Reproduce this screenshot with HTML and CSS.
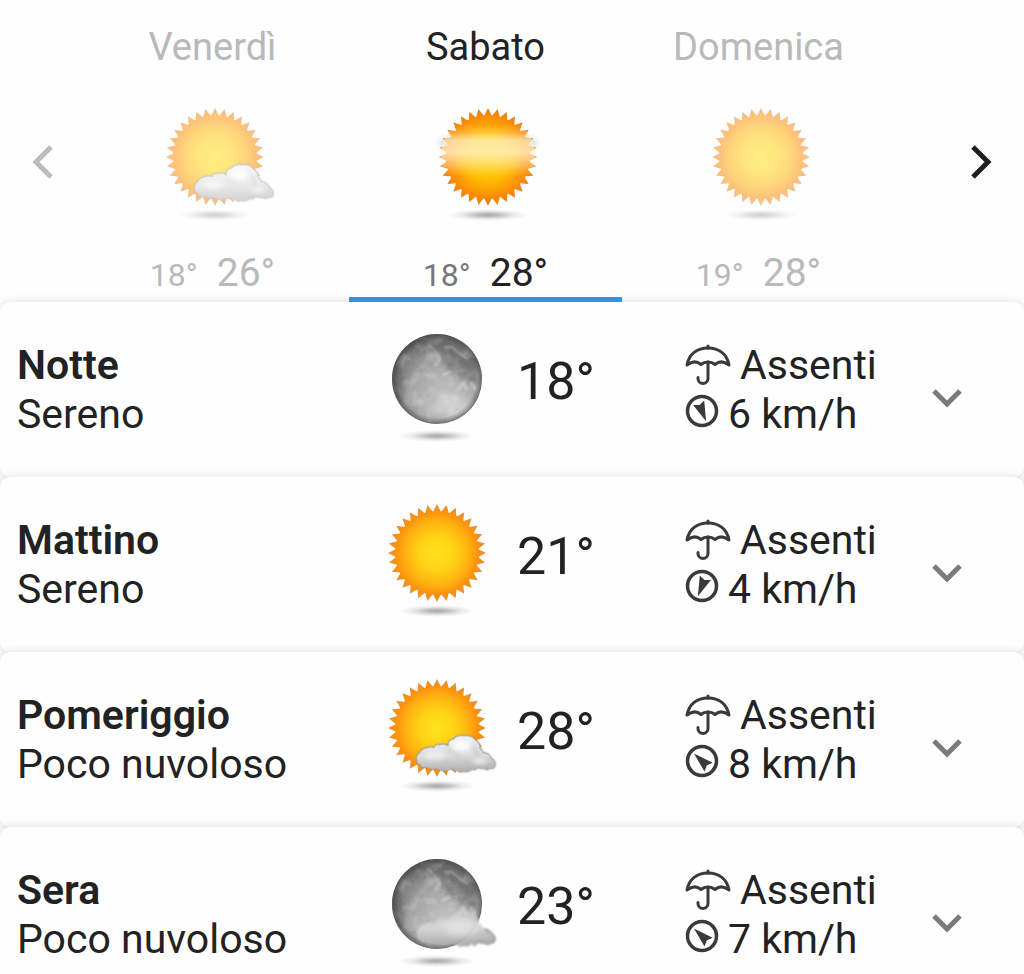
FILE: index.html
```html
<!DOCTYPE html>
<html lang="it">
<head>
<meta charset="utf-8">
<meta name="viewport" content="width=device-width, initial-scale=1">
<title>Previsioni meteo</title>
<link rel="stylesheet" href="styles.css">
</head>
<body>
<svg class="sprite" aria-hidden="true">
  <defs>
    <radialGradient id="sun-fill" gradientUnits="userSpaceOnUse" cx="0" cy="0" r="49">
      <stop offset="0" stop-color="#ffe31c"/>
      <stop offset=".35" stop-color="#ffd316"/>
      <stop offset=".65" stop-color="#ffb210"/>
      <stop offset=".84" stop-color="#fd920f"/>
      <stop offset=".91" stop-color="#f48f1c"/>
      <stop offset="1" stop-color="#d2965a"/>
    </radialGradient>
    <radialGradient id="haze-fill" gradientUnits="userSpaceOnUse" cx="0" cy="0" r="49">
      <stop offset="0" stop-color="#ffcf08"/>
      <stop offset=".45" stop-color="#ffc004"/>
      <stop offset=".85" stop-color="#fb8905"/>
      <stop offset=".93" stop-color="#ee8312"/>
      <stop offset="1" stop-color="#cf9156"/>
    </radialGradient>
    <linearGradient id="haze-band" gradientUnits="userSpaceOnUse" x1="0" y1="22" x2="0" y2="74">
      <stop offset="0" stop-color="#fff6d8" stop-opacity="0"/>
      <stop offset=".15" stop-color="#fff6d8" stop-opacity=".2"/>
      <stop offset=".32" stop-color="#fff6d8" stop-opacity=".7"/>
      <stop offset=".55" stop-color="#fff6d8" stop-opacity=".75"/>
      <stop offset=".78" stop-color="#fff6d8" stop-opacity=".4"/>
      <stop offset="1" stop-color="#fff6d8" stop-opacity="0"/>
    </linearGradient>
    <radialGradient id="shadow-fill">
      <stop offset="0" stop-color="#000" stop-opacity=".34"/>
      <stop offset=".3" stop-color="#000" stop-opacity=".24"/>
      <stop offset=".65" stop-color="#000" stop-opacity=".08"/>
      <stop offset="1" stop-color="#000" stop-opacity="0"/>
    </radialGradient>
    <radialGradient id="moon-fill" cx=".6" cy=".68" r=".75">
      <stop offset="0" stop-color="#c2c2c2"/>
      <stop offset=".45" stop-color="#a8a8a8"/>
      <stop offset=".8" stop-color="#7c7c7c"/>
      <stop offset="1" stop-color="#5c5c5c"/>
    </radialGradient>
    <radialGradient id="moon-rim">
      <stop offset=".86" stop-color="#333" stop-opacity="0"/>
      <stop offset="1" stop-color="#333" stop-opacity=".5"/>
    </radialGradient>
    <linearGradient id="cloud-fill" x1=".4" y1="0" x2=".5" y2="1">
      <stop offset="0" stop-color="#f1f1f1"/>
      <stop offset=".55" stop-color="#dcdcdc"/>
      <stop offset="1" stop-color="#adadad"/>
    </linearGradient>
    <linearGradient id="night-cloud-fill" x1="0" y1="0" x2=".2" y2="1">
      <stop offset="0" stop-color="#d0d0d0" stop-opacity=".35"/>
      <stop offset=".5" stop-color="#d8d8d8" stop-opacity=".9"/>
      <stop offset="1" stop-color="#a8a8a8" stop-opacity=".9"/>
    </linearGradient>
    <filter id="soft1" x="-20%" y="-20%" width="140%" height="140%"><feGaussianBlur stdDeviation="1"/></filter>
    <filter id="soft2" x="-40%" y="-40%" width="180%" height="180%"><feGaussianBlur stdDeviation="2"/></filter>
    <filter id="soft3" x="-40%" y="-80%" width="180%" height="260%"><feGaussianBlur stdDeviation="3"/></filter>
    <filter id="dust" x="0" y="0" width="100%" height="100%">
      <feTurbulence type="fractalNoise" baseFrequency=".07" numOctaves="4" seed="8"/>
      <feColorMatrix values="0 0 0 0 1  0 0 0 0 1  0 0 0 0 1  2.4 0 0 0 -1"/>
    </filter>
    <clipPath id="moon-clip"><circle cx="60" cy="56" r="44"/></clipPath>
    <path id="cloud-shape" d="M40 87Q39 82 43 80Q44 76 50 75Q54 73 57 75Q58 71 63 72Q67 70 71 73Q71 67 77 66Q80 62 87 63Q94 62 98 67Q103 70 103 76Q106 77 106 80Q112 80 114 85Q119 88 118 92Q118 96 113 95Q110 98 107 95Q103 96 101 94Q99 98 95 96Q91 100 87 98Q82 100 80 97Q77 98 75 95Q71 98 67 97Q63 98 59 95Q54 97 50 94Q45 95 43 91Q40 91 40 87Z"/>
    <path id="sun-ray" d="M0-49L4-41V41L0 49-4 41V-41Z"/>
    <g id="sun-shape">
      <circle r="42"/>
      <use href="#sun-ray"/>
      <use href="#sun-ray" transform="rotate(11.25)"/>
      <use href="#sun-ray" transform="rotate(22.5)"/>
      <use href="#sun-ray" transform="rotate(33.75)"/>
      <use href="#sun-ray" transform="rotate(45)"/>
      <use href="#sun-ray" transform="rotate(56.25)"/>
      <use href="#sun-ray" transform="rotate(67.5)"/>
      <use href="#sun-ray" transform="rotate(78.75)"/>
      <use href="#sun-ray" transform="rotate(90)"/>
      <use href="#sun-ray" transform="rotate(101.25)"/>
      <use href="#sun-ray" transform="rotate(112.5)"/>
      <use href="#sun-ray" transform="rotate(123.75)"/>
      <use href="#sun-ray" transform="rotate(135)"/>
      <use href="#sun-ray" transform="rotate(146.25)"/>
      <use href="#sun-ray" transform="rotate(157.5)"/>
      <use href="#sun-ray" transform="rotate(168.75)"/>
    </g>
  </defs>

  <symbol id="sun" viewBox="-4 3 124 120">
    <ellipse cx="60" cy="113" rx="38" ry="6" fill="url(#shadow-fill)"/>
    <use href="#sun-shape" transform="translate(60 55)" fill="url(#sun-fill)"/>
  </symbol>

  <symbol id="haze" viewBox="-4 3 124 120">
    <ellipse cx="60" cy="113" rx="40" ry="6" fill="url(#shadow-fill)"/>
    <ellipse cx="60" cy="41" rx="48" ry="7" fill="#555" opacity=".4" filter="url(#soft3)"/>
    <use href="#sun-shape" transform="translate(60 55)" fill="url(#haze-fill)"/>
    <circle cx="60" cy="55" r="47" fill="url(#haze-band)"/>
  </symbol>

  <symbol id="sun-cloud" viewBox="-4 3 124 120">
    <use href="#sun" x="-4" y="3" width="124" height="120"/>
    <use href="#cloud-shape" fill="#888" stroke="#888" stroke-width="1" filter="url(#soft1)"/>
    <use href="#cloud-shape" fill="url(#cloud-fill)" stroke="#b4b4b4" stroke-width="1"/>
    <g filter="url(#soft2)">
      <ellipse cx="84" cy="73" rx="10" ry="6" fill="#fff" opacity=".8"/>
      <ellipse cx="58" cy="83" rx="10" ry="4" fill="#fff" opacity=".5"/>
      <path d="M71 75Q75 80 84 82M94 72Q102 78 100 85" fill="none" stroke="#aaa" stroke-width="2" opacity=".7"/>
      <ellipse cx="103" cy="88" rx="8" ry="3" fill="#f5f5f5" opacity=".7"/>
    </g>
  </symbol>

  <symbol id="moon" viewBox="-4 3 124 120">
    <ellipse cx="60" cy="113" rx="38" ry="6" fill="url(#shadow-fill)"/>
    <circle cx="60" cy="56" r="45" fill="url(#moon-fill)"/>
    <g clip-path="url(#moon-clip)">
      <g filter="url(#soft3)">
        <path d="M22 24Q40 6 66 10Q90 15 104 42L100 60Q88 62 80 48Q66 46 62 30Q44 22 22 34Z" fill="#5c5c5c" opacity=".6"/>
        <path d="M66 36Q80 28 90 40Q98 48 98 58Q86 60 78 50Q68 50 66 36Z" fill="#707070" opacity=".55"/>
        <ellipse cx="16" cy="58" rx="10" ry="30" fill="#555" opacity=".5"/>
        <ellipse cx="76" cy="84" rx="22" ry="11" fill="#ddd" opacity=".5"/>
      </g>
      <g filter="url(#soft1)" fill="none" stroke="#ddd" stroke-linecap="round">
        <path d="M52 22L58 28 63 36 59 42M68 24L75 24 82 30 90 36" stroke-width="2" opacity=".4"/>
        <path d="M66 52L73 49M80 68L86 60 90 66M94 60L98 66" stroke-width="3" opacity=".5"/>
        <path d="M62 88L76 74 84 86" stroke-width="3" opacity=".2"/>
      </g>
      <rect x="15" y="11" width="90" height="90" filter="url(#dust)" opacity=".28"/>
    </g>
    <circle cx="60" cy="56" r="45" fill="url(#moon-rim)"/>
  </symbol>

  <symbol id="moon-cloud" viewBox="-4 3 124 120">
    <use href="#moon" x="-4" y="3" width="124" height="120"/>
    <use href="#cloud-shape" fill="url(#night-cloud-fill)" filter="url(#soft1)"/>
    <path d="M96 98L101 94 107 95Q112 98 118 92Q118 86 108 81" fill="none" stroke="#888" stroke-width="2" opacity=".6" filter="url(#soft1)"/>
    <ellipse cx="84" cy="80" rx="16" ry="9" fill="#e8e8e8" opacity=".6" filter="url(#soft3)"/>
  </symbol>

  <symbol id="umbrella" viewBox="0 0 46 42">
    <g fill="none" stroke="#3a3a3a" stroke-width="3" stroke-linecap="round" stroke-linejoin="round">
      <path d="M23 2V4"/>
      <path d="M2 21C4 10 12 4 23 4S42 10 44 21C39 17 34 17 30 20.500C26 17 20 17 16 20.500C12 17 7 17 2 21Z"/>
      <path d="M23 18V34.500a5 5 0 0 1-10 0v-1"/>
    </g>
  </symbol>
</svg>

<main class="forecast">
  <nav class="days" aria-label="Giorni">
    <button class="arrow arrow-prev" type="button" aria-label="Giorno precedente">
      <svg width="24" height="36" viewBox="0 0 24 36"><path d="M20 3L5 18 20 33"/></svg>
    </button>
    <button class="day" type="button">
      <span class="day-name">Venerdì</span>
      <svg class="weather" aria-hidden="true"><use href="#sun-cloud"/></svg>
      <span class="range"><span class="low">18°</span><span class="high">26°</span></span>
    </button>
    <button class="day day-active" type="button" aria-current="date">
      <span class="day-name">Sabato</span>
      <svg class="weather" aria-hidden="true"><use href="#haze"/></svg>
      <span class="range"><span class="low">18°</span><span class="high">28°</span></span>
    </button>
    <button class="day" type="button">
      <span class="day-name">Domenica</span>
      <svg class="weather" aria-hidden="true"><use href="#sun"/></svg>
      <span class="range"><span class="low">19°</span><span class="high">28°</span></span>
    </button>
    <button class="arrow arrow-next" type="button" aria-label="Giorno successivo">
      <svg width="24" height="36" viewBox="0 0 24 36"><path d="M4 3L19 18 4 33"/></svg>
    </button>
  </nav>

  <section class="periods">
    <article class="period">
      <div class="label"><h2>Notte</h2><p>Sereno</p></div>
      <svg class="weather" aria-hidden="true"><use href="#moon"/></svg>
      <div class="temp">18°</div>
      <div class="details">
        <p><svg width="46" height="42" aria-hidden="true"><use href="#umbrella"/></svg>Assenti</p>
        <p><svg width="34" height="40" viewBox="-17 -17 34 40" aria-hidden="true"><circle class="dial" r="14.500"/><path class="needle" transform="rotate(158)" d="M0-11L6 9 0 6.500-6 9Z"/></svg>6 km/h</p>
      </div>
      <button class="expand" type="button" aria-label="Dettagli notte"><svg width="36" height="24" viewBox="0 0 36 24"><path d="M5 5L18 18 31 5"/></svg></button>
    </article>
    <article class="period">
      <div class="label"><h2>Mattino</h2><p>Sereno</p></div>
      <svg class="weather" aria-hidden="true"><use href="#sun"/></svg>
      <div class="temp">21°</div>
      <div class="details">
        <p><svg width="46" height="42" aria-hidden="true"><use href="#umbrella"/></svg>Assenti</p>
        <p><svg width="34" height="40" viewBox="-17 -17 34 40" aria-hidden="true"><circle class="dial" r="14.500"/><path class="needle" transform="rotate(202)" d="M0-11L6 9 0 6.500-6 9Z"/></svg>4 km/h</p>
      </div>
      <button class="expand" type="button" aria-label="Dettagli mattino"><svg width="36" height="24" viewBox="0 0 36 24"><path d="M5 5L18 18 31 5"/></svg></button>
    </article>
    <article class="period">
      <div class="label"><h2>Pomeriggio</h2><p>Poco nuvoloso</p></div>
      <svg class="weather" aria-hidden="true"><use href="#sun-cloud"/></svg>
      <div class="temp">28°</div>
      <div class="details">
        <p><svg width="46" height="42" aria-hidden="true"><use href="#umbrella"/></svg>Assenti</p>
        <p><svg width="34" height="40" viewBox="-17 -17 34 40" aria-hidden="true"><circle class="dial" r="14.500"/><path class="needle" transform="rotate(-47)" d="M0-11L6 9 0 6.500-6 9Z"/></svg>8 km/h</p>
      </div>
      <button class="expand" type="button" aria-label="Dettagli pomeriggio"><svg width="36" height="24" viewBox="0 0 36 24"><path d="M5 5L18 18 31 5"/></svg></button>
    </article>
    <article class="period">
      <div class="label"><h2>Sera</h2><p>Poco nuvoloso</p></div>
      <svg class="weather" aria-hidden="true"><use href="#moon-cloud"/></svg>
      <div class="temp">23°</div>
      <div class="details">
        <p><svg width="46" height="42" aria-hidden="true"><use href="#umbrella"/></svg>Assenti</p>
        <p><svg width="34" height="40" viewBox="-17 -17 34 40" aria-hidden="true"><circle class="dial" r="14.500"/><path class="needle" transform="rotate(-47)" d="M0-11L6 9 0 6.500-6 9Z"/></svg>7 km/h</p>
      </div>
      <button class="expand" type="button" aria-label="Dettagli sera"><svg width="36" height="24" viewBox="0 0 36 24"><path d="M5 5L18 18 31 5"/></svg></button>
    </article>
  </section>
</main>
</body>
</html>
```
FILE: styles.css
```css
* { box-sizing: border-box; }

html { scrollbar-width: none; }

body {
  margin: 0;
  background: #fefefe;
  color: #222;
  font-family: Roboto, "Liberation Sans", sans-serif;
}

h2, p { margin: 0; }

button {
  margin: 0;
  padding: 0;
  border: 0;
  background: none;
  color: inherit;
  font: inherit;
  cursor: pointer;
}

svg { display: block; flex: none; }

.sprite { position: absolute; width: 0; height: 0; }

.weather { width: 124px; height: 120px; }

/* Day selector */
.days {
  display: grid;
  grid-template-columns: 76px repeat(3, minmax(0, 1fr)) 129px;
}

.day {
  display: flex;
  flex-direction: column;
  align-items: center;
  padding: 23px 0 1px;
  border-bottom: 5px solid transparent;
  color: #b9b9b9;
}

.day .weather { margin: 34px 0 25px; opacity: .55; }

.day-name { font-size: 38px; line-height: 48px; }

.range {
  display: flex;
  align-items: baseline;
  gap: 19px;
}

.low { font-size: 32px; line-height: 32px; }
.high { font-size: 39px; line-height: 46px; }

.day-active { border-bottom-color: #2f92e2; color: #222; }
.day-active .weather { opacity: 1; }
.day-active .low { color: #777; }

.arrow { display: flex; align-items: center; padding-top: 22px; }
.arrow path { fill: none; stroke: currentColor; stroke-width: 5; }
.arrow-prev { padding-left: 31px; color: #bbb; }
.arrow-next { justify-content: flex-end; padding-right: 31px; color: #1f1f1f; }

/* Parts of the day */
.period {
  display: grid;
  grid-template-columns: minmax(0, 1fr) 124px 188px 210px 104px;
  align-items: center;
  min-height: 175px;
  padding: 0 25px 0 17px;
  border-radius: 10px;
  background: #fefefe;
  box-shadow: 0 0 10px rgba(0, 0, 0, .14);
}

.period .weather { align-self: start; margin-top: 24px; }

.label, .details { font-size: 41px; line-height: 49px; }
.label h2 { font-size: 41px; font-weight: 600; }

.temp {
  padding: 0 0 15px 20px;
  font-size: 52px;
  line-height: 64px;
}

.details p {
  display: flex;
  align-items: center;
  gap: 9px;
}

.dial { fill: none; stroke: #3a3a3a; stroke-width: 3.5; }
.needle { fill: #3a3a3a; }

.expand {
  display: flex;
  justify-content: center;
  align-self: stretch;
  align-items: center;
  padding-top: 16px;
  color: #7a7a7a;
}
.expand path { fill: none; stroke: currentColor; stroke-width: 5; }
```
